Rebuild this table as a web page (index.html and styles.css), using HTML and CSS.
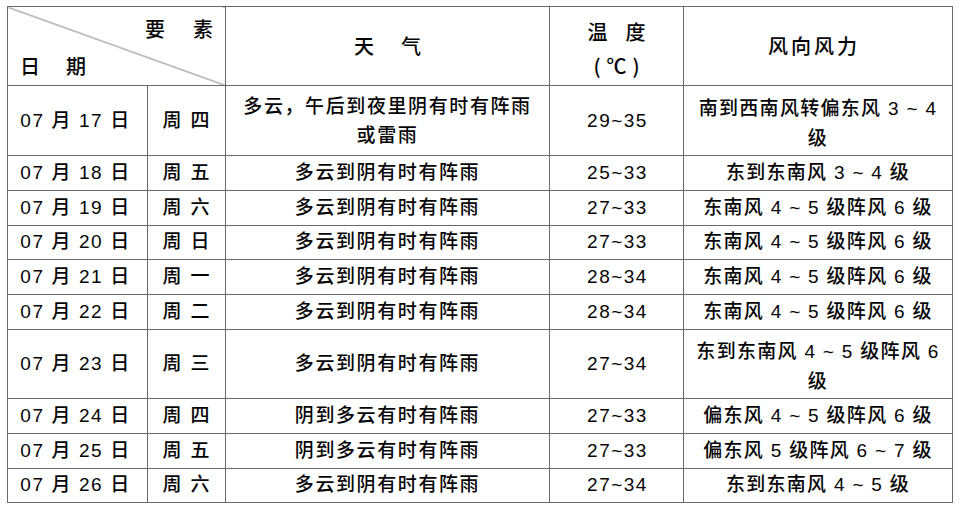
FILE: index.html
```html
<!DOCTYPE html>
<html lang="zh-CN">
<head>
<meta charset="utf-8">
<title>天气预报</title>
<link rel="stylesheet" href="styles.css">
</head>
<body>
<table class="forecast">
  <colgroup>
    <col class="c-date"><col class="c-week"><col class="c-weather"><col class="c-temp"><col class="c-wind">
  </colgroup>
  <thead>
    <tr class="head">
      <th colspan="2" class="diag">
        <div class="diag-inner">
          <span class="elem">要素</span>
          <span class="datelbl">日期</span>
        </div>
      </th>
      <th class="h-weather">天气</th>
      <th class="h-temp"><span class="line">温度</span><span class="line">(℃)</span></th>
      <th class="h-wind">风向风力</th>
    </tr>
  </thead>
  <tbody>
    <tr class="tall">
      <td class="date">07 月 17 日</td><td class="week">周四</td>
      <td class="weather two">多云，午后到夜里阴有时有阵雨<br>或雷雨</td>
      <td class="temp">29~35</td>
      <td class="wind two">南到西南风转偏东风 3 ~ 4<br>级</td>
    </tr>
    <tr class="row">
      <td class="date">07 月 18 日</td><td class="week">周五</td>
      <td class="weather">多云到阴有时有阵雨</td><td class="temp">25~33</td>
      <td class="wind">东到东南风 3 ~ 4 级</td>
    </tr>
    <tr class="row">
      <td class="date">07 月 19 日</td><td class="week">周六</td>
      <td class="weather">多云到阴有时有阵雨</td><td class="temp">27~33</td>
      <td class="wind">东南风 4 ~ 5 级阵风 6 级</td>
    </tr>
    <tr class="row">
      <td class="date">07 月 20 日</td><td class="week">周日</td>
      <td class="weather">多云到阴有时有阵雨</td><td class="temp">27~33</td>
      <td class="wind">东南风 4 ~ 5 级阵风 6 级</td>
    </tr>
    <tr class="row">
      <td class="date">07 月 21 日</td><td class="week">周一</td>
      <td class="weather">多云到阴有时有阵雨</td><td class="temp">28~34</td>
      <td class="wind">东南风 4 ~ 5 级阵风 6 级</td>
    </tr>
    <tr class="row">
      <td class="date">07 月 22 日</td><td class="week">周二</td>
      <td class="weather">多云到阴有时有阵雨</td><td class="temp">28~34</td>
      <td class="wind">东南风 4 ~ 5 级阵风 6 级</td>
    </tr>
    <tr class="tall tall-b">
      <td class="date">07 月 23 日</td><td class="week">周三</td>
      <td class="weather">多云到阴有时有阵雨</td><td class="temp">27~34</td>
      <td class="wind two">东到东南风 4 ~ 5 级阵风 6<br>级</td>
    </tr>
    <tr class="row">
      <td class="date">07 月 24 日</td><td class="week">周四</td>
      <td class="weather">阴到多云有时有阵雨</td><td class="temp">27~33</td>
      <td class="wind">偏东风 4 ~ 5 级阵风 6 级</td>
    </tr>
    <tr class="row">
      <td class="date">07 月 25 日</td><td class="week">周五</td>
      <td class="weather">阴到多云有时有阵雨</td><td class="temp">27~33</td>
      <td class="wind">偏东风 5 级阵风 6 ~ 7 级</td>
    </tr>
    <tr class="row">
      <td class="date">07 月 26 日</td><td class="week">周六</td>
      <td class="weather">多云到阴有时有阵雨</td><td class="temp">27~34</td>
      <td class="wind">东到东南风 4 ~ 5 级</td>
    </tr>
  </tbody>
</table>
</body>
</html>
```

FILE: styles.css
```css
html, body {
  margin: 0;
  padding: 0;
  background: #ffffff;
}

body {
  font-family: "Liberation Sans", "Noto Sans CJK SC", sans-serif;
  color: #050505;
}

.forecast {
  margin: 6px 0 0 7px;
  width: 946px;
  border-collapse: collapse;
  table-layout: fixed;
  font-size: 19px;
  font-weight: 500;
}

.c-date { width: 140px; }
.c-week { width: 78px; }
.c-weather { width: 324px; }
.c-temp { width: 134px; }
.c-wind { width: 269px; }

.forecast th,
.forecast td {
  border: 1px solid #6a6a6a;
  padding: 0;
  text-align: center;
  vertical-align: middle;
  font-weight: 500;
  white-space: nowrap;
  line-height: 24px;
}

.head th { height: 78px; }
.tall td { height: 69px; }
.tall-b td { height: 68px; }
.row td { height: 33.8px; }

/* header */
.diag {
  background: linear-gradient(to top right,
    transparent calc(50% - 0.8px),
    #6a6a6a 50%,
    transparent calc(50% + 0.8px));
}

.diag-inner {
  display: flex;
  flex-direction: column;
  justify-content: space-between;
  height: 78px;
  box-sizing: border-box;
  padding: 10px 0 7px 0;
  font-family: "Noto Sans CJK SC", sans-serif;
  font-size: 20px;
}

.elem {
  align-self: flex-end;
  letter-spacing: 28px;
  margin-right: -16px;
}

.datelbl {
  align-self: flex-start;
  letter-spacing: 26px;
  margin-left: 12px;
}

.h-weather {
  font-family: "Noto Sans CJK SC", sans-serif;
  font-size: 20px;
  letter-spacing: 27px;
  padding-left: 27px !important;
}

.head th.h-temp {
  font-family: "Noto Sans CJK SC", sans-serif;
  padding-top: 6px;
  height: 72px;
}

.h-temp .line {
  display: block;
  font-size: 20px;
  line-height: 34px;
}

.h-temp .line:first-child {
  letter-spacing: 18px;
  padding-left: 18px;
}

.h-temp .line:last-child {
  letter-spacing: 6px;
  padding-left: 6px;
}

.h-wind {
  font-family: "Noto Sans CJK SC", sans-serif;
  font-size: 20px;
  letter-spacing: 3px;
  padding-right: 8px !important;
}

/* body */
.date {
  letter-spacing: 1.6px;
  padding-right: 4px !important;
}

.week {
  letter-spacing: 9px;
  padding-left: 8px !important;
}

.weather {
  letter-spacing: 1.6px;
}

.weather.two {
  line-height: 29px;
}

.temp {
  letter-spacing: 1.5px;
  padding-left: 2px !important;
}

.wind {
  letter-spacing: 1.3px;
}

.tall td.wind.two {
  line-height: 30px;
  padding-top: 6px;
  height: 63px;
}

.tall-b td.wind.two {
  height: 62px;
}
```
